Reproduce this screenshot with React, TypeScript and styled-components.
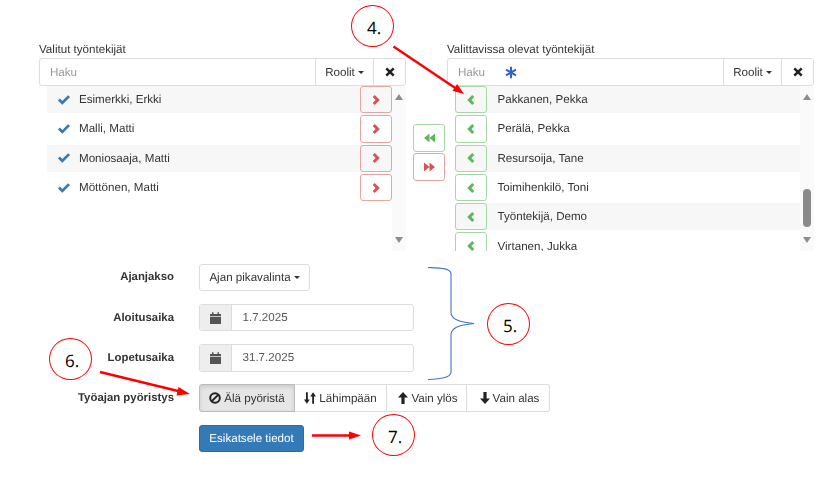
import styled, { createGlobalStyle } from 'styled-components'

const selected = ['Esimerkki, Erkki', 'Malli, Matti', 'Moniosaaja, Matti', 'Möttönen, Matti']
const available = ['Pakkanen, Pekka', 'Perälä, Pekka', 'Resursoija, Tane', 'Toimihenkilö, Toni', 'Työntekijä, Demo', 'Virtanen, Jukka']

const ChevronRight = () => (
  <Glyph width="8" height="10" viewBox="0 0 8 10">
    <path d="M0.7 2.1L2.8 0L7.8 5L2.8 10L0.7 7.9L3.6 5Z" />
  </Glyph>
)
const ChevronLeft = () => (
  <Glyph width="8" height="10" viewBox="0 0 8 10">
    <path d="M7.3 2.1L5.2 0L0.2 5L5.2 10L7.3 7.9L4.4 5Z" />
  </Glyph>
)
const CheckIcon = () => (
  <Glyph width="12" height="10" viewBox="0 0 12 10">
    <path d="M0 5.4L1.9 3.6L4.3 6L10.1 0.2L12 2.1L4.3 9.8Z" />
  </Glyph>
)
const CrossIcon = () => (
  <Glyph width="10" height="10" viewBox="0 0 10 10">
    <path d="M2.2 0.4L5 3.2L7.8 0.4L9.6 2.2L6.8 5L9.6 7.8L7.8 9.6L5 6.8L2.2 9.6L0.4 7.8L3.2 5L0.4 2.2Z" />
  </Glyph>
)
const BackwardIcon = () => (
  <Glyph width="11" height="10" viewBox="0 0 11 10">
    <path d="M0 5L5.5 0.4V9.6ZM5.5 5L11 0.4V9.6Z" />
  </Glyph>
)
const ForwardIcon = () => (
  <Glyph width="11" height="10" viewBox="0 0 11 10">
    <path d="M11 5L5.5 0.4V9.6ZM5.5 5L0 0.4V9.6Z" />
  </Glyph>
)
const CalendarIcon = () => (
  <Glyph width="11" height="12" viewBox="0 0 11 12">
    <path d="M0 2H2V0.3H3.5V2H7.5V0.3H9V2H11V4H0ZM0 4.8H11V12H0Z" />
  </Glyph>
)
const BanIcon = () => (
  <BanGlyph width="12" height="12" viewBox="0 0 12 12">
    <circle cx="6" cy="6" r="4.8" />
    <path d="M2.6 9.4L9.4 2.6" />
  </BanGlyph>
)
const SortIcon = () => (
  <Glyph width="12" height="12" viewBox="0 0 12 12">
    <path d="M2 0.3H3.8V7.6H5.8L2.9 11.7L0 7.6H2ZM8.2 11.7V4.4H6.2L9.1 0.3L12 4.4H10V11.7Z" />
  </Glyph>
)
const ArrowUpIcon = () => (
  <Glyph width="10" height="12" viewBox="0 0 10 12">
    <path d="M5 0L10 5.4H6.6V12H3.4V5.4H0Z" />
  </Glyph>
)
const ArrowDownIcon = () => (
  <Glyph width="10" height="12" viewBox="0 0 10 12">
    <path d="M5 12L10 6.6H6.6V0H3.4V6.6H0Z" />
  </Glyph>
)

const SearchBar = ({ star }: { star?: boolean }) => (
  <InputGroup>
    <SearchInput>
      Haku
      {star && (
        <Star viewBox="0 0 12 12">
          <path d="M6 0.3V11.7M1 3.1L11 8.9M11 3.1L1 8.9" />
        </Star>
      )}
    </SearchInput>
    <RoleButton>Roolit <Caret /></RoleButton>
    <ClearButton><CrossIcon /></ClearButton>
  </InputGroup>
)

const App = () => {
  return (
    <Page>
      <GlobalStyle />
      <Transfer>
        <Panel>
          <PanelLabel>Valitut työntekijät</PanelLabel>
          <SearchBar />
          <ListArea>
            <List>
              {selected.map(name => (
                <Row key={name}>
                  <CheckMark><CheckIcon /></CheckMark>
                  <Name>{name}</Name>
                  <MoveButton $tone="red"><ChevronRight /></MoveButton>
                </Row>
              ))}
            </List>
            <ScrollTrack>
              <TriangleUp />
              <ThumbSlot />
              <TriangleDown />
            </ScrollTrack>
          </ListArea>
        </Panel>
        <MiddleButtons>
          <MoveAllButton $tone="green"><BackwardIcon /></MoveAllButton>
          <MoveAllButton $tone="red"><ForwardIcon /></MoveAllButton>
        </MiddleButtons>
        <Panel>
          <PanelLabel>Valittavissa olevat työntekijät</PanelLabel>
          <SearchBar star />
          <ListArea>
            <List>
              {available.map(name => (
                <Row key={name}>
                  <MoveButton $tone="green"><ChevronLeft /></MoveButton>
                  <AvailableName>{name}</AvailableName>
                </Row>
              ))}
            </List>
            <ScrollTrack>
              <TriangleUp />
              <ThumbSlot><Thumb /></ThumbSlot>
              <TriangleDown />
            </ScrollTrack>
          </ListArea>
        </Panel>
      </Transfer>

      <Form>
        <FieldLabel>Ajanjakso</FieldLabel>
        <div><DropdownButton>Ajan pikavalinta <Caret /></DropdownButton></div>

        <FieldLabel>Aloitusaika</FieldLabel>
        <DateGroup>
          <DateAddon><CalendarIcon /></DateAddon>
          <DateValue>1.7.2025</DateValue>
        </DateGroup>

        <FieldLabel>Lopetusaika</FieldLabel>
        <DateGroup>
          <DateAddon><CalendarIcon /></DateAddon>
          <DateValue>31.7.2025</DateValue>
        </DateGroup>

        <FieldLabel>Työajan pyöristys</FieldLabel>
        <RoundingGroup>
          <RoundingButton $active $width={96}><BanIcon /> Älä pyöristä</RoundingButton>
          <RoundingButton $width={92}><SortIcon /> Lähimpään</RoundingButton>
          <RoundingButton $width={80} $indent={3}><ArrowUpIcon /> Vain ylös</RoundingButton>
          <RoundingButton $width={83} $indent={3}><ArrowDownIcon /> Vain alas</RoundingButton>
        </RoundingGroup>

        <span />
        <div><PreviewButton>Esikatsele tiedot</PreviewButton></div>
      </Form>

      <Annotations viewBox="0 0 839 477">
        <RedLine d="M393.5 46.5L456 88.5" />
        <RedHead points="464,94 452.5,90.8 457.2,84" />
        <RedLine d="M100 372L178 391" />
        <RedHead points="190,394 176.5,395.5 178.5,387" />
        <RedLine d="M312 435.5H350" />
        <RedHead points="361,435.5 349,431.5 349,439.5" />
        <BlueBrace d="M428 267.5C440 268 451 268 451 274V312C451 319 458 322 474 323.5C458 325 451 328 451 335V372C451 378 440 379 428 379.5" />
      </Annotations>
      <Callout $x={351} $y={5}>4.</Callout>
      <Callout $x={487} $y={303}>5.</Callout>
      <Callout $x={49} $y={338}>6.</Callout>
      <Callout $x={372} $y={414}>7.</Callout>
    </Page>
  )
}

const GlobalStyle = createGlobalStyle`
  html, body {
    margin: 0;
    padding: 0;
    background: #fff;
  }
  * {
    box-sizing: border-box;
  }
`

const tones = {
  red: { text: '#d9534f', border: '#e9a3a1' },
  green: { text: '#5cb85c', border: '#a5d8a5' },
}

const Page = styled.div`
  position: relative;
  width: 839px;
  height: 477px;
  overflow: hidden;
  padding: 43px 0 0 39px;
  font-family: "Liberation Sans", Arial, sans-serif;
  font-size: 11.6px;
  text-rendering: geometricPrecision;
  color: #333;
  filter: blur(0.35px);
`
const Glyph = styled.svg`
  display: block;
  flex: none;
  fill: currentColor;
`
const BanGlyph = styled.svg`
  display: block;
  flex: none;
  fill: none;
  stroke: currentColor;
  stroke-width: 2;
`
const Transfer = styled.div`
  display: flex;
  width: 775px;
`
const Panel = styled.div`
  width: 367px;
  flex: none;
`
const PanelLabel = styled.div`
  height: 15px;
  line-height: 14px;
`
const InputGroup = styled.div`
  display: flex;
  height: 28px;
  border: 1px solid #ddd;
  border-radius: 3px;
`
const SearchInput = styled.div`
  flex: 1;
  display: flex;
  align-items: center;
  padding-left: 10px;
  color: #999;
`
const Star = styled.svg`
  width: 12px;
  height: 13px;
  margin-left: 20px;
  fill: none;
  stroke: #2f62cc;
  stroke-width: 2;
`
const RoleButton = styled.div`
  width: 59px;
  display: flex;
  align-items: center;
  justify-content: center;
  gap: 3px;
  border-left: 1px solid #ddd;
  border-right: 1px solid #ddd;
`
const ClearButton = styled.div`
  width: 31px;
  display: flex;
  align-items: center;
  justify-content: center;
  color: #222;
`
const Caret = styled.span`
  display: inline-block;
  width: 0;
  height: 0;
  border-top: 3.5px solid #333;
  border-left: 3.5px solid transparent;
  border-right: 3.5px solid transparent;
`
const ListArea = styled.div`
  display: flex;
  height: 165px;
  overflow: hidden;
`
const List = styled.div`
  flex: 1;
  padding-left: 8px;
`
const Row = styled.div`
  display: flex;
  align-items: center;
  height: 27.3px;
  margin-bottom: 2px;
  &:nth-child(odd) {
    background: #f7f7f7;
  }
`
const CheckMark = styled.span`
  display: flex;
  width: 32px;
  padding-left: 11px;
  color: #337ab7;
`
const Name = styled.span`
  flex: 1;
`
const AvailableName = styled.span`
  flex: 1;
  padding-left: 10.5px;
`
const MoveButton = styled.span<{ $tone: 'red' | 'green' }>`
  flex: none;
  width: 32px;
  height: 27.3px;
  display: flex;
  align-items: center;
  justify-content: center;
  border: 1px solid ${p => tones[p.$tone].border};
  border-radius: 3px;
  color: ${p => tones[p.$tone].text};
`
const ScrollTrack = styled.div`
  flex: none;
  width: 14px;
  background: #fafafa;
  display: flex;
  flex-direction: column;
  align-items: center;
  padding: 8px 0;
`
const ThumbSlot = styled.div`
  flex: 1;
  width: 100%;
  display: flex;
  flex-direction: column;
  justify-content: flex-end;
  align-items: center;
  padding-bottom: 10px;
`
const Thumb = styled.div`
  width: 8px;
  height: 38px;
  border-radius: 4px;
  background: #8a8a8a;
`
const TriangleUp = styled.div`
  border-bottom: 6px solid #8d8d8d;
  border-left: 4.5px solid transparent;
  border-right: 4.5px solid transparent;
`
const TriangleDown = styled.div`
  border-top: 6px solid #8d8d8d;
  border-left: 4.5px solid transparent;
  border-right: 4.5px solid transparent;
`
const MiddleButtons = styled.div`
  flex: none;
  width: 41px;
  padding: 81px 0 0 7px;
  display: flex;
  flex-direction: column;
  gap: 1.5px;
`
const MoveAllButton = styled.span<{ $tone: 'red' | 'green' }>`
  width: 32px;
  height: 27.5px;
  display: flex;
  align-items: center;
  justify-content: center;
  border: 1px solid ${p => tones[p.$tone].border};
  border-radius: 3px;
  color: ${p => tones[p.$tone].text};
`
const Form = styled.div`
  display: grid;
  grid-template-columns: 135px 1fr;
  column-gap: 25px;
  row-gap: 12.8px;
  grid-auto-rows: 27.5px;
  margin-top: 12.5px;
`
const FieldLabel = styled.div`
  display: flex;
  align-items: center;
  justify-content: flex-end;
  font-weight: bold;
  font-size: 11.4px;
`
const DropdownButton = styled.span`
  display: inline-flex;
  align-items: center;
  justify-content: center;
  gap: 3px;
  width: 111px;
  height: 27.5px;
  border: 1px solid #ddd;
  border-radius: 3px;
`
const DateGroup = styled.div`
  display: flex;
  width: 215px;
  border: 1px solid #ddd;
  border-radius: 3px;
`
const DateAddon = styled.div`
  width: 32px;
  display: flex;
  align-items: center;
  justify-content: center;
  background: #eee;
  border-right: 1px solid #ddd;
  color: #555;
`
const DateValue = styled.div`
  flex: 1;
  display: flex;
  align-items: center;
  padding-left: 10.5px;
  color: #555;
`
const RoundingGroup = styled.div`
  display: flex;
`
const RoundingButton = styled.span<{ $active?: boolean; $width: number; $indent?: number }>`
  width: ${p => p.$width}px;
  display: flex;
  align-items: center;
  justify-content: center;
  gap: 3px;
  padding-left: ${p => p.$indent ?? 0}px;
  border: 1px solid ${p => (p.$active ? '#bbb' : '#ddd')};
  border-left-width: ${p => (p.$active ? '1px' : '0')};
  background: ${p => (p.$active ? '#e6e6e6' : '#fff')};
  box-shadow: ${p => (p.$active ? 'inset 0 2px 4px rgba(0,0,0,.12)' : 'none')};
  color: #333;
  svg {
    color: #222;
  }
  &:first-child {
    border-radius: 3px 0 0 3px;
  }
  &:last-child {
    border-radius: 0 3px 3px 0;
  }
`
const PreviewButton = styled.span`
  display: inline-flex;
  align-items: center;
  justify-content: center;
  width: 105px;
  height: 27.5px;
  border-radius: 3px;
  background: #337ab7;
  border: 1px solid #2e6da4;
  color: #fff;
`
const Annotations = styled.svg`
  position: absolute;
  left: 0;
  top: 0;
  width: 839px;
  height: 477px;
  pointer-events: none;
`
const RedLine = styled.path`
  fill: none;
  stroke: #f00;
  stroke-width: 2.4;
`
const RedHead = styled.polygon`
  fill: #f00;
`
const BlueBrace = styled.path`
  fill: none;
  stroke: #4472c4;
  stroke-width: 1.1;
`
const Callout = styled.div<{ $x: number; $y: number }>`
  position: absolute;
  left: ${p => p.$x}px;
  top: ${p => p.$y}px;
  width: 43px;
  height: 42px;
  padding: 3px 0 0 3px;
  border: 1px solid #f00;
  border-radius: 50%;
  background: #fff;
  display: flex;
  align-items: center;
  justify-content: center;
  font-family: "Open Sans", sans-serif;
  font-size: 17px;
  color: #000;
`

export default App
